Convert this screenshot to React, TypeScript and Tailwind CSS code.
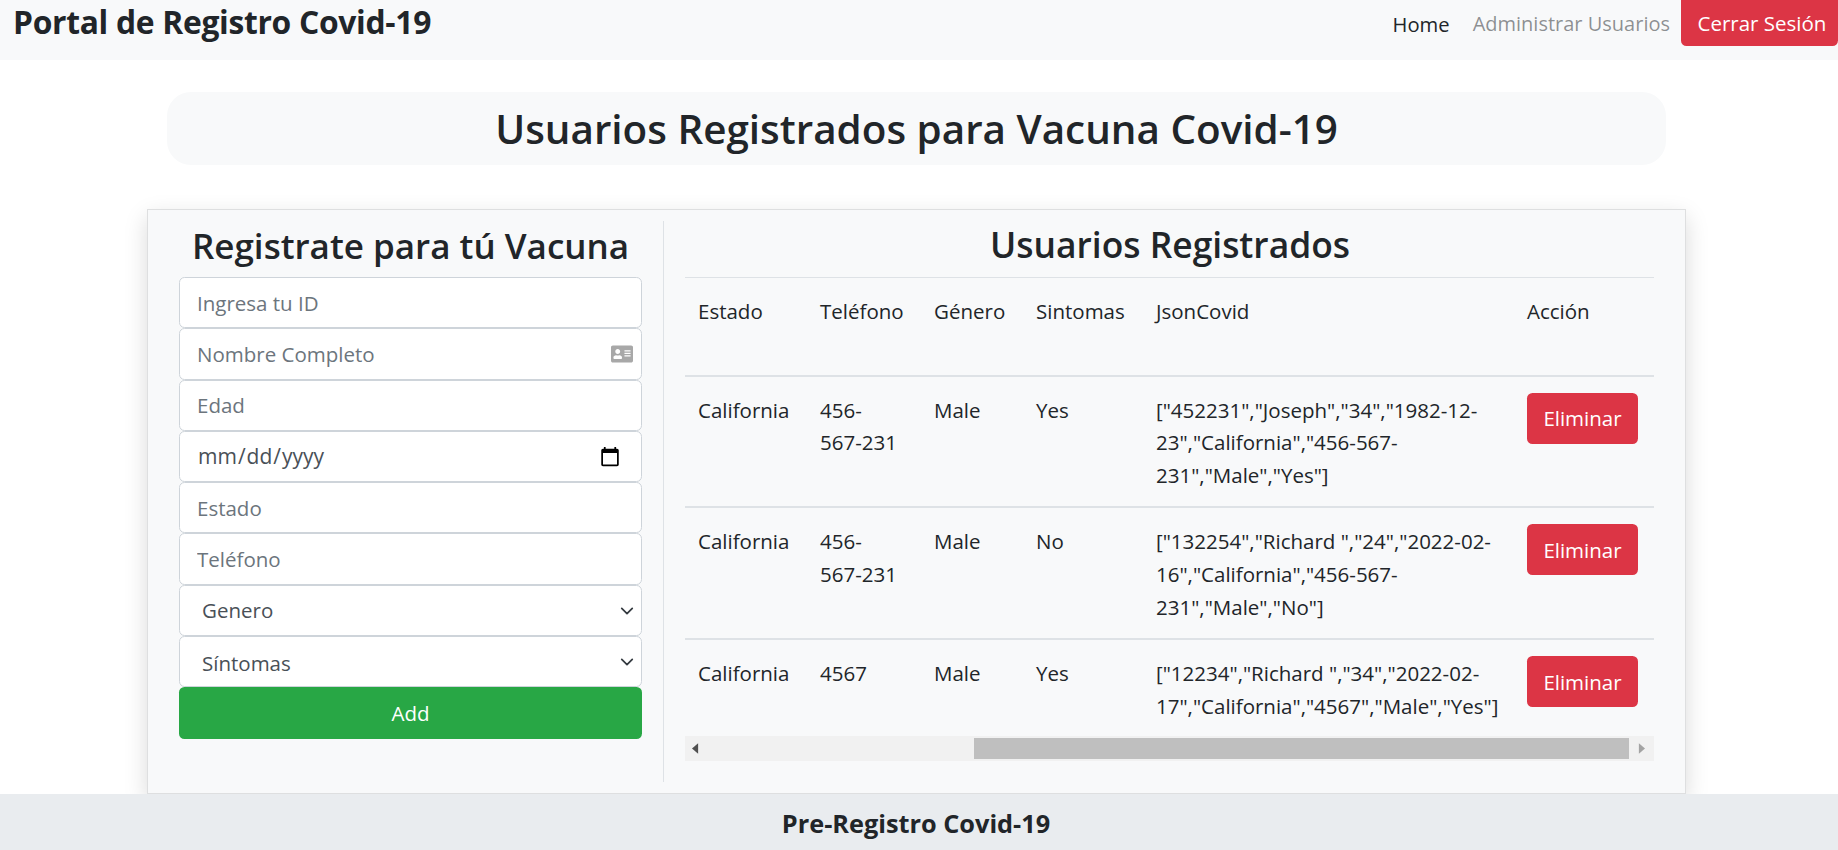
import React from 'react';
import { FaAddressCard } from 'react-icons/fa';

const rows = [
  { estado: 'California', telefono: '456-567-231', genero: 'Male', sintomas: 'Yes', json: '["452231","Joseph","34","1982-12-23","California","456-567-231","Male","Yes"]' },
  { estado: 'California', telefono: '456-567-231', genero: 'Male', sintomas: 'No', json: '["132254","Richard ","24","2022-02-16","California","456-567-231","Male","No"]' },
  { estado: 'California', telefono: '4567', genero: 'Male', sintomas: 'Yes', json: '["12234","Richard ","34","2022-02-17","California","4567","Male","Yes"]' },
];

const inputClass =
  "block w-full h-[51.3px] shrink-0 bg-white border border-[#ced4da] rounded-[5.5px] pl-[17px] pr-3 text-[20.5px] text-[#495057] placeholder:text-[#6c757d] outline-none";

const Chevron = () => (
  <svg viewBox="0 0 16 16" className="absolute right-[8px] top-[19px] w-[14px] h-[14px] pointer-events-none" fill="none" stroke="#343a40" strokeWidth="2" strokeLinecap="round" strokeLinejoin="round">
    <path d="m2 5 6 6 6-6" />
  </svg>
);

const SelectField: React.FC<{ label: string; className?: string }> = ({ label, className = '' }) => (
  <div className="relative shrink-0">
    <select className={inputClass + " appearance-none pl-[22px] " + className}>
      <option>{label}</option>
    </select>
    <Chevron />
  </div>
);

const App: React.FC = () => {
  return (
    <div className="font-['Open_Sans',sans-serif] text-[#212529] text-[20.5px] leading-[32.65px] bg-white h-[850px] overflow-hidden">
      <nav className="h-[60px] bg-[#f8f9fa] flex items-start justify-between pl-[13px]">
        <span className="text-[31.8px] font-bold leading-[44px] tracking-[-0.3px] text-[#212529]">Portal de Registro Covid-19</span>
        <div className="flex items-start">
          <a className="mt-[8px] text-[20.2px] text-[#212529]">Home</a>
          <a className="mt-[8px] ml-[23px] text-[20px] text-[#212529]/50">Administrar Usuarios</a>
          <button className="ml-[11px] w-[157px] h-[46px] pl-[5px] bg-[#dc3545] text-white rounded-bl-[5.5px] rounded-br-[5.5px] leading-[40px]">Cerrar Sesión</button>
        </div>
      </nav>

      <div className="mt-[32px] ml-[167px] w-[1499px] h-[73px] bg-[#f8f9fa] rounded-[24px] flex items-center justify-center">
        <h1 className="text-[40.4px] font-semibold leading-[79px]">Usuarios Registrados para Vacuna Covid-19</h1>
      </div>

      <div className="relative mt-[44px] ml-[147px] w-[1539px] h-[585px] bg-[#f8f9fa] border border-black/10 shadow-[0_8px_22px_rgba(0,0,0,0.15)] flex pt-[11px]">
        <div className="w-[516px] h-[561px] border-r border-[#dee2e6] pl-[31px] pr-[21px] flex flex-col">
          <h2 className="h-[56px] text-center text-[35px] font-semibold leading-[49px]">Registrate para tú Vacuna</h2>
          <input className={inputClass} placeholder="Ingresa tu ID" />
          <div className="relative shrink-0">
            <input className={inputClass} placeholder="Nombre Completo" />
            <FaAddressCard className="absolute right-[9px] top-[15px] text-[#a8a8a8] w-[22px] h-[22px]" />
          </div>
          <input className={inputClass} placeholder="Edad" />
          <input className={inputClass + " text-[21px] pr-[18px] [&::-webkit-calendar-picker-indicator]:w-[22px] [&::-webkit-calendar-picker-indicator]:h-[22px]"} type="date" />
          <input className={inputClass} placeholder="Estado" />
          <input className={inputClass} placeholder="Teléfono" />
          <SelectField label="Genero" />
          <SelectField label="Síntomas" className="pt-[3px]" />
          <button className="h-[52px] shrink-0 bg-[#28a745] text-white rounded-[5.5px]">Add</button>
        </div>

        <div className="w-[991px] pl-[21px] flex flex-col">
          <h2 className="h-[56px] text-center text-[35.4px] font-semibold leading-[47px]">Usuarios Registrados</h2>
          <div className="w-[969px] h-[459px] overflow-hidden">
            <table className="w-[969px] table-fixed border-collapse text-left">
              <colgroup>
                <col className="w-[122px]" />
                <col className="w-[114px]" />
                <col className="w-[102px]" />
                <col className="w-[120px]" />
                <col className="w-[371px]" />
                <col className="w-[140px]" />
              </colgroup>
              <thead>
                <tr className="border-t border-b-2 border-[#dee2e6] h-[98px] align-top">
                  <th className="font-normal px-[13px] pt-[17px]">Estado</th>
                  <th className="font-normal px-[13px] pt-[17px]">Teléfono</th>
                  <th className="font-normal px-[13px] pt-[17px]">Género</th>
                  <th className="font-normal px-[13px] pt-[17px]">Sintomas</th>
                  <th className="font-normal px-[13px] pt-[17px]">JsonCovid</th>
                  <th className="font-normal px-[13px] pt-[17px]">Acción</th>
                </tr>
              </thead>
              <tbody>
                {rows.map((row, i) => (
                  <tr key={row.json} className={i < 2 ? "border-b-2 border-[#dee2e6] align-top" : "align-top"}>
                    <td className="px-[13px] pt-[17px] pb-[15px]">{row.estado}</td>
                    <td className="pl-[13px] pr-[20px] pt-[17px] pb-[15px]">{row.telefono}</td>
                    <td className="px-[13px] pt-[17px] pb-[15px]">{row.genero}</td>
                    <td className="px-[13px] pt-[17px] pb-[15px]">{row.sintomas}</td>
                    <td className="px-[13px] pt-[17px] pb-[15px] break-words">{row.json}</td>
                    <td className="px-[13px] pt-[16px] pb-[15px]">
                      <button className="w-[111px] h-[51px] bg-[#dc3545] text-white rounded-[5.5px]">Eliminar</button>
                    </td>
                  </tr>
                ))}
              </tbody>
            </table>
          </div>
          <div className="w-[969px] h-[25px] bg-[#f1f1f1] flex items-center">
            <svg viewBox="0 0 8 12" className="ml-[7px] w-[7px] h-[11px]" fill="#505050"><path d="M7 0v12L0 6z" /></svg>
            <div className="ml-[275px] w-[655px] h-[21px] bg-[#bfbfbf]" />
            <svg viewBox="0 0 8 12" className="ml-[9px] w-[7px] h-[11px]" fill="#a3a3a3"><path d="M1 0v12l7-6z" /></svg>
          </div>
        </div>
      </div>

      <footer className="relative h-[56px] bg-[#e9ecef] flex items-center justify-center pr-[6px] pt-[3px]">
        <span className="text-[25.3px] font-bold">Pre-Registro Covid-19</span>
      </footer>
    </div>
  );
};

export default App;
